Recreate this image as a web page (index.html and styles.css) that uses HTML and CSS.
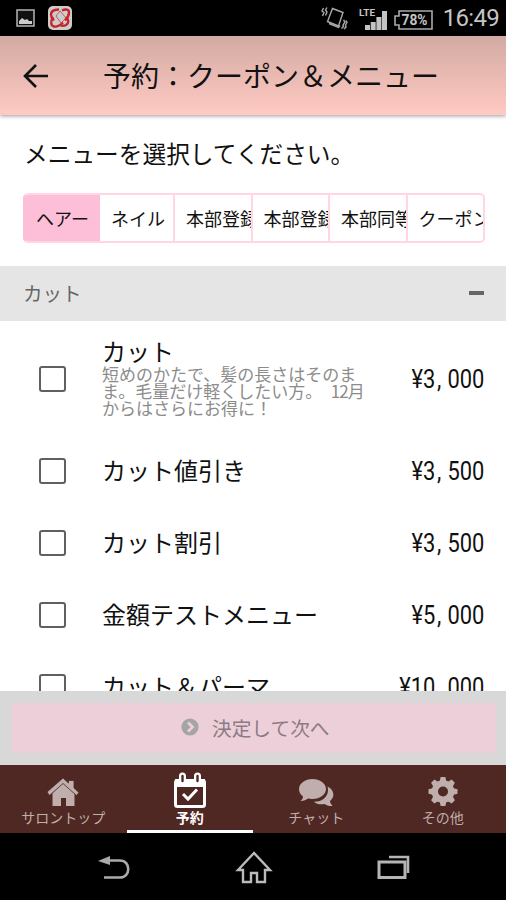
FILE: index.html
```html
<!DOCTYPE html>
<html lang="ja">
<head>
<meta charset="utf-8">
<title>予約：クーポン＆メニュー</title>
<link rel="stylesheet" href="styles.css">
</head>
<body>
<div class="phone">
  <div class="status">
    <svg class="status-left" width="64" height="30" viewBox="0 0 64 30">
      <rect x="1" y="7" width="17" height="16" fill="#111" stroke="#aaa" stroke-width="1.6"/>
      <path d="M3 21v-3l3-3 3 2 2-1 2 2 3 0v3z" fill="#ccc"/>
      <rect x="32" y="3" width="24" height="24" rx="5" fill="#ccc"/>
      <g fill="none" stroke="#c92328" stroke-width="2.4">
        <path d="M43 6.500c-5 0-8 2-8 5 0 2 1 4 3 6"/>
        <path d="M46 7.500c4-2 7-1 7 2s-2 6-4 8"/>
        <path d="M37 14c-3 5-2 9 1 9.500 3 .5 6-1 9-4"/>
        <path d="M50 14c3 3 3 6 0 8-2 1-4 1-6 0"/>
      </g>
      <path d="M44 8l-4 5 5 7 5-5z" fill="none" stroke="#c92328" stroke-width=".7"/>
    </svg>
    <svg class="status-right" width="116" height="30" viewBox="0 0 116 30">
      <g fill="none" stroke="#aaa" stroke-width="1.4">
        <path d="M11.500 5.500l10.500 4-4.500 13.500-11-4.500z"/>
        <path d="M8 20.500l9.500 4 1.500-2"/>
        <path d="M2.500 5l-1.500 3 2 1.500-1.500 3.500M6 4.500L4.500 7l1.500 2-1.500 3.500M22.500 17l1.500 2-2 3 .5 1.500-2 2M25 17.500l1 2-1.500 2.500.5 2-2 2"/>
      </g>
      <g fill="#c4c4c4">
        <path d="M44 22h5v5h-5zM49.700 19h5v8h-5zM55.400 14h5v13h-5zM61 8h5v19h-5z"/>
        <text class="lte" x="38" y="13" textLength="16" lengthAdjust="spacingAndGlyphs">LTE</text>
        <text class="percent" x="80.500" y="22" textLength="26" lengthAdjust="spacingAndGlyphs">78%</text>
      </g>
      <path d="M78 8h33v18H78v-4h-4v-9h4z" fill="none" stroke="#aaa" stroke-width="1.6"/>
    </svg>
    <span class="clock">16:49</span>
  </div>

  <header class="header">
    <svg width="26" height="26" viewBox="0 0 26 26" fill="none" stroke="#111" stroke-width="2.600"><path d="M13 2L2 13l11 11M2 13h23"/></svg>
    <h1>予約：クーポン＆メニュー</h1>
  </header>

  <main class="content">
    <p class="prompt">メニューを選択してください。</p>
    <div class="tabs">
      <div class="tab active">ヘアー</div>
      <div class="tab">ネイル</div>
      <div class="tab wide">本部登録</div>
      <div class="tab wide">本部登録</div>
      <div class="tab wide">本部同等</div>
      <div class="tab last">クーポン</div>
    </div>
    <div class="group"><span>カット</span><i class="minus"></i></div>
    <div class="row tall">
      <i class="check"></i>
      <div class="info"><div class="name">カット</div><p class="desc">短めのかたで、髪の長さはそのま<br>ま。毛量だけ軽くしたい方。　<span class="half">12</span>月<br>からはさらにお得に！</p></div>
      <div class="price">¥3<span>,</span>000</div>
    </div>
    <div class="row"><i class="check"></i><div class="info name">カット値引き</div><div class="price">¥3<span>,</span>500</div></div>
    <div class="row"><i class="check"></i><div class="info name">カット割引</div><div class="price">¥3<span>,</span>500</div></div>
    <div class="row"><i class="check"></i><div class="info name">金額テストメニュー</div><div class="price">¥5<span>,</span>000</div></div>
    <div class="row"><i class="check"></i><div class="info name">カット＆パーマ</div><div class="price">¥10<span>,</span>000</div></div>
  </main>

  <div class="action">
    <div class="button">
      <svg width="18" height="18" viewBox="0 0 18 18"><circle cx="9" cy="9" r="8.600" fill="#a5a5a4"/><path d="M7 4.500L11.500 9 7 13.500" fill="none" stroke="#eccfd9" stroke-width="2.800"/></svg>
      <span>決定して次へ</span>
    </div>
  </div>

  <nav class="nav">
    <div class="item">
      <svg width="32" height="36" viewBox="0 0 32 36" fill="#bfaeab"><path d="M16 11L27.500 21v13H19v-8h-5v8H5.500V21z"/><path d="M0 20L16 6l5.500 5V8.500h5.500V16l5 4.500-2.500 3L16 11.500 2.500 23.500z" stroke="#4f2723" stroke-width=".8"/></svg>
      <span>サロントップ</span>
    </div>
    <div class="item selected">
      <svg width="34" height="36" viewBox="0 0 34 36"><rect x="2.500" y="8.500" width="29" height="26" rx="2" fill="none" stroke="#fff" stroke-width="3"/><path d="M2 7h30v8H2z" fill="#fff"/><path d="M9.500 4v6M24.500 4v6" stroke="#fff" stroke-width="7" stroke-linecap="round"/><path d="M9.500 4v5M24.500 4v5" stroke="#4f2723" stroke-width="2.400" stroke-linecap="round"/><path d="M10 22l5 5 9-9.500" fill="none" stroke="#fff" stroke-width="3"/></svg>
      <span>予約</span>
    </div>
    <div class="item">
      <svg width="36" height="36" viewBox="0 0 36 36" fill="#bfaeab"><path d="M29.500 14.500c6.500 3 8 10 2.500 14.500 0 2 1.500 3.500 2.500 5-3 .3-6-.5-8-2-4 .8-8 .2-10.500-2.200C25 30 32 23 29.500 14.500z"/><path d="M14.500 7C22 7 28 11.500 28 17s-6 10-13.500 10c-2 0-3 0-4.500-.4-2 1.700-4.500 2.500-7.500 2.400 1.500-1.500 2.500-2.500 2.500-4.500C2.500 22.500 1 20 1 17 1 11.500 7 7 14.500 7z"/></svg>
      <span>チャット</span>
    </div>
    <div class="item">
      <svg width="32" height="36" viewBox="0 0 32 36"><g fill="#bfaeab"><circle cx="16" cy="19.500" r="11.300"/><path id="tooth" d="M12.700 9l1-4h4.600l1 4v21l-1 4h-4.600l-1-4z"/><use href="#tooth" transform="rotate(45 16 19.500)"/><use href="#tooth" transform="rotate(90 16 19.500)"/><use href="#tooth" transform="rotate(135 16 19.500)"/></g><circle cx="16" cy="19.500" r="5" fill="#4f2723"/></svg>
      <span>その他</span>
    </div>
  </nav>

  <div class="system">
    <svg width="34" height="26" viewBox="0 0 34 26"><path d="M13 1v9L1 6z" fill="#aaa"/><path d="M11 5.500h12c11 0 11 17 0 17H7" fill="none" stroke="#aaa" stroke-width="2.600"/></svg>
    <svg width="38" height="34" viewBox="0 0 38 34" fill="none" stroke="#bbb" stroke-width="2.400"><path d="M19 2L3 19h5v12h8v-9h6v9h8V19h5z"/></svg>
    <svg width="34" height="26" viewBox="0 0 34 26" fill="none" stroke="#b5b5b5"><rect x="2" y="7" width="26" height="15.500" stroke-width="3"/><path d="M12 2h19v16" stroke-width="2.600"/></svg>
  </div>
</div>
</body>
</html>
```
FILE: styles.css
```css
* { box-sizing: border-box; }
body {
  margin: 0;
  background: #fff;
  color: #111;
  font-family: "Noto Sans CJK JP", sans-serif;
}
.phone {
  width: 506px;
  height: 900px;
  display: flex;
  flex-direction: column;
  overflow: hidden;
}
svg { display: block; flex: none; }

.status {
  height: 36px;
  flex: none;
  display: flex;
  align-items: center;
  padding: 0 7px 0 16px;
  background: #000;
  color: #c4c4c4;
}
.status-right { margin-left: auto; }
.lte { font: bold 9.500px Roboto, sans-serif; }
.percent { font: bold 14px Roboto, sans-serif; }
.clock {
  width: 62px;
  text-align: right;
  font: 24px/38px Roboto, sans-serif;
  white-space: nowrap;
  letter-spacing: -0.7px;
}

.header {
  position: relative;
  z-index: 1;
  height: 79px;
  flex: none;
  display: flex;
  align-items: center;
  gap: 54px;
  padding-left: 23px;
  background: linear-gradient(#d2aaa2, #ffcac3);
  box-shadow: 0 1px 4px rgba(0, 0, 0, .4);
}
.header h1 {
  margin: 0;
  padding-bottom: 2px;
  font-size: 28px;
  line-height: 40px;
  font-weight: 400;
  white-space: nowrap;
}

.content {
  height: 576px;
  flex: none;
  overflow: hidden;
  padding-top: 20px;
  background: #fff;
}
.prompt {
  margin: 0 0 22px 24px;
  font-size: 23.700px;
  line-height: 36px;
}
.tabs {
  display: flex;
  width: 462px;
  height: 50px;
  margin: 0 0 23px 23px;
  border: 2px solid #ffd6e1;
  border-left-color: #fdbfd7;
  border-radius: 5px;
  overflow: hidden;
}
.tab {
  width: 75px;
  flex: none;
  padding-left: 11px;
  border-right: 2px solid #ffd6e1;
  overflow: hidden;
  white-space: nowrap;
  font-size: 18px;
  line-height: 46px;
}
.tab.active { background: #fdbfd7; border-color: #fdbfd7; }
.tab.wide { width: 77.500px; }
.tab.last { flex: 1; border-right: 0; }

.group {
  height: 55px;
  display: flex;
  align-items: center;
  justify-content: space-between;
  padding: 0 22px 2px 23px;
  background: #e5e5e5;
  color: #666;
  font-size: 19.500px;
}
.minus { width: 15px; height: 4px; background: #666; }

.row {
  height: 72px;
  display: flex;
  align-items: center;
  padding: 0 22px 0 39px;
}
.row.tall { height: 114px; padding-top: 1px; }
.check {
  width: 27px;
  height: 26px;
  flex: none;
  margin-right: 36px;
  border: 2px solid #606060;
  border-radius: 3px;
}
.info { flex: 1; white-space: nowrap; }
.name { font-size: 24px; line-height: 32px; }
.info.name { padding-bottom: 2px; }
.row.tall .name { line-height: 28px; }
.desc {
  margin: 0 0 5px;
  color: #8c8c8c;
  font-size: 17px;
  line-height: 17px;
}
.half { letter-spacing: -1px; }
.price {
  padding-top: 2px;
  font: 25px/32px Roboto, sans-serif;
  transform: scaleX(.875);
  transform-origin: right;
}
.price span { display: inline-block; width: 14px; padding-left: 2px; }

.action {
  height: 74px;
  flex: none;
  padding: 12px 10px 12px 12px;
  background: #d8d8d8;
}
.button {
  height: 50px;
  display: flex;
  align-items: center;
  gap: 13px;
  padding: 0 0 2px 169px;
  background: #eccfd9;
  color: #8d7b82;
  font-size: 19.700px;
}

.nav {
  height: 68px;
  flex: none;
  display: grid;
  grid-template-columns: repeat(4, 1fr);
  background: #4f2723;
  color: #bfaeab;
}
.item {
  display: flex;
  flex-direction: column;
  align-items: center;
  padding-top: 7px;
  font-size: 14px;
  line-height: 18px;
}
.selected { border-bottom: 3px solid #fff; color: #fff; font-weight: 700; }

.system {
  flex: 1;
  display: flex;
  align-items: center;
  gap: 104px;
  padding: 2px 0 0 97px;
  background: #000;
}
```
